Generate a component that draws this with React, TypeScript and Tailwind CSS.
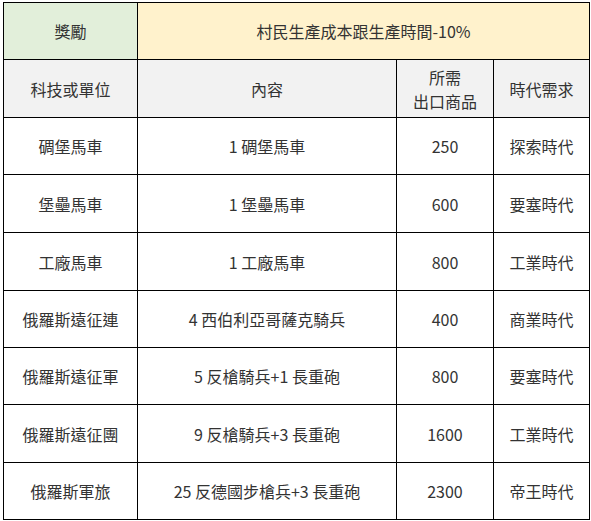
import React from "react";

const rows: [string, string, string, string][] = [
  ["碉堡馬車", "1 碉堡馬車", "250", "探索時代"],
  ["堡壘馬車", "1 堡壘馬車", "600", "要塞時代"],
  ["工廠馬車", "1 工廠馬車", "800", "工業時代"],
  ["俄羅斯遠征連", "4 西伯利亞哥薩克騎兵", "400", "商業時代"],
  ["俄羅斯遠征軍", "5 反槍騎兵+1 長重砲", "800", "要塞時代"],
  ["俄羅斯遠征團", "9 反槍騎兵+3 長重砲", "1600", "工業時代"],
  ["俄羅斯軍旅", "25 反德國步槍兵+3 長重砲", "2300", "帝王時代"],
];

const heights = [57, 58, 58, 57, 57, 58, 57];

export default function App() {
  return (
    <div
      className="w-[591px] h-[521px] bg-white pt-[2px] pl-[3px]"
      style={{ fontFamily: '"Noto Sans CJK TC", "Noto Sans", sans-serif' }}
    >
      <table className="table-fixed border-collapse text-[16px] text-[#333333] w-[586px]">
        <colgroup>
          <col className="w-[134px]" />
          <col className="w-[259px]" />
          <col className="w-[97px]" />
          <col className="w-[96px]" />
        </colgroup>
        <tbody>
          <tr className="h-[57px]">
            <td className="border border-black bg-[#e2efda] text-center p-0">獎勵</td>
            <td colSpan={3} className="border border-black bg-[#fff2cc] text-center p-0">
              村民生產成本跟生產時間-10%
            </td>
          </tr>
          <tr className="h-[58px]">
            <td className="border border-black bg-[#f2f2f2] text-center p-0">科技或單位</td>
            <td className="border border-black bg-[#f2f2f2] text-center p-0">內容</td>
            <td className="border border-black bg-[#f2f2f2] text-center p-0 leading-[24px]">
              所需
              <br />
              出口商品
            </td>
            <td className="border border-black bg-[#f2f2f2] text-center p-0">時代需求</td>
          </tr>
          {rows.map((r, i) => (
            <tr key={i} style={{ height: heights[i] }}>
              {r.map((c, j) => (
                <td key={j} className="border border-black text-center p-0 bg-white">
                  {c}
                </td>
              ))}
            </tr>
          ))}
        </tbody>
      </table>
    </div>
  );
}
